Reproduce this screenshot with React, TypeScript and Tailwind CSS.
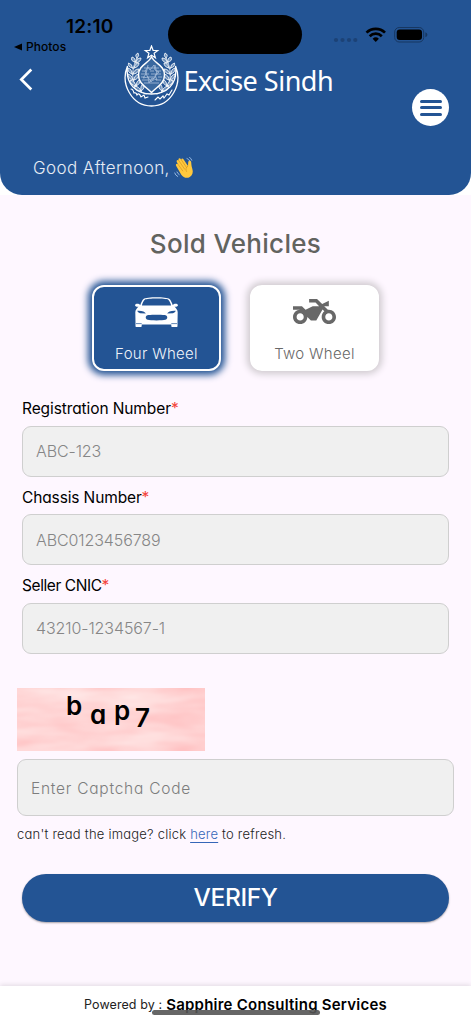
import { useState } from "react";
//
import { MdTwoWheeler } from "react-icons/md";

type VehicleType = "four" | "two";

const fields = [
  { label: "Registration Number", placeholder: "ABC-123", tracking: "tracking-[-0.1px]" },
  { label: "Chassis Number", placeholder: "ABC0123456789", tracking: "tracking-[-0.13px]" },
  { label: "Seller CNIC", placeholder: "43210-1234567-1", tracking: "tracking-[-0.42px]" },
];

const captcha = [
  { char: "b", className: "mt-0 w-[24px]" },
  { char: "a", className: "mt-[9px] w-[24px]" },
  { char: "p", className: "mt-[5px] w-[21px]" },
  { char: "7", className: "mt-[12px] w-[16px]" },
];

const StatusBar = () => (
  <div className="absolute inset-x-0 top-0 z-10 h-[60px] text-black [font-feature-settings:normal]">
    <span className="absolute left-[66px] top-[15px] text-[19px] leading-6 font-semibold tracking-[0.2px]">12:10</span>
    <div className="absolute left-[14px] top-[39px] flex items-center gap-[4px] text-[12px] leading-4 font-medium tracking-[0.05px]">
      <svg width="8" height="8" viewBox="0 0 8 8">
        <path d="M0 4 8 .6v6.8z" />
      </svg>
      Photos
    </div>
    <div className="absolute left-[168px] top-[15px] h-[39px] w-[134px] rounded-full bg-black" />
    <svg className="absolute left-[333px] top-[24px]" width="96" height="22" viewBox="333 24 96 22">
      <g fill="#1c4276">
        <circle cx="336" cy="40" r="2.1" />
        <circle cx="342.500" cy="40" r="2.1" />
        <circle cx="349" cy="40" r="2.1" />
        <circle cx="355.300" cy="40" r="2.1" />
      </g>
      <g fill="none" stroke="#000" strokeWidth="2.700">
        <path d="M366.500 32.600a13.200 13.200 0 0 1 18.500 0" />
        <path d="M369.700 36.200a8.600 8.600 0 0 1 12.100 0" />
      </g>
      <path d="M372.600 38.800a4.600 4.600 0 0 1 6.300 0l-3.150 3.300z" />
      <rect x="394.700" y="27.500" width="29" height="14.500" rx="4.500" fill="none" stroke="#173761" />
      <rect x="396.700" y="29.500" width="25.300" height="10.500" rx="3" />
      <path d="M425.400 32.300q2 .8 2 2.500t-2 2.500z" fill="#173761" />
    </svg>
  </div>
);

// one side of the wreath, the other one is mirrored
const Wreath = () => (
  <g fill="#6f92bd" stroke="#fff" strokeWidth=".8" strokeLinecap="round">
    <path d="M22 49C10 45 4 31 13 13" fill="none" />
    <path d="M13 13q-3-3 1-5 2 3-1 5zM11 17q-5-1-3-5 4 1 3 5zM12 18q0-5 5-5 0 4-5 5zM8.500 23q-5-1-4-5 4 1 4 5zM10 23q1-5 5-5 0 4-5 5zM8 29q-5-2-4-6 4 1 4 6zM9 29q1-5 6-5-1 5-6 5zM9 35q-6-2-5-6 4 1 5 6zM10 35q0-5 5-6 0 5-5 6zM12 41q-6-1-6-6 5 1 6 6zM12 41q0-5 4-7 1 5-4 7zM17 46q-6 0-7-5 5 0 7 5zM17 46q-1-5 2-7 3 4-2 7z" />
  </g>
);

const Emblem = () => (
  <svg width="55" height="62" viewBox="0 0 55 62" className="shrink-0">
    <path d="m27.500 1 1.600 4.300 4.700.2-3.700 2.800 1.300 4.500-3.900-2.600-3.900 2.600 1.300-4.500-3.700-2.800 4.700-.2z" fill="none" stroke="#fff" strokeWidth="1.200" />
    <Wreath />
    <g transform="translate(55 0) scale(-1 1)">
      <Wreath />
    </g>
    <path d="M27.500 12C24 19 14.500 20 14.500 30c0 9 8 12 13 17.500C32.500 42 40.500 39 40.500 30c0-10-9.500-11-13-18z" fill="#3a689f" stroke="#fff" strokeWidth="1.500" />
    <g fill="none" stroke="#a9bfda" strokeWidth=".8">
      <path d="M20 23h15M18 26h5m3 0h4m3 0h4M17 29h8m2 0h10M17 32h4m2 0h9m2 0h4M18 35h6m2 0h4m2 0h5M20 38h15" />
      <path d="m21 26 3-4 2 3 4-5 1 5 4 2-4 3 2 5-5-2-3 5-1-6-5 1 3-4zM24 20l-2 9 5 8 6-8-2-9" />
    </g>
    <path d="M3.500 21C-4 39 8 61 27.500 61S59 39 51.500 21C54 40 42 49 27.500 49S1 40 3.500 21z" fill="none" stroke="#fff" strokeWidth="1.300" />
    <path d="M7 44q2 0 3 4 2-1 3 2 2-3 4 2l3-2 1 3 3-1M31 55l3-3 2 2 3-3 1 2 3-4 2 1 3-5" fill="none" stroke="#fff" strokeWidth="1.100" strokeLinecap="round" />
  </svg>
);

const WavingHand = () => (
  <svg width="20" height="22" viewBox="0 0 20 22">
    <path
      d="M2.100 8.700c-.8-1.500 1-2.600 2-1.300L2.800 5C2 3.400 3.900 2.300 4.900 3.700L4.600 3C3.900 1.500 5.800.5 6.800 2l.6 1c-.4-1.400 1.200-2.100 2.100-.8l4.300 6.500c.7-1.200 0-3.500.9-4.700 1-1.200 2.300-.2 2.500 1.200.2 2.200.3 4.300 1.100 6.500 1.200 3.500.2 6.600-2.500 8.300-3 1.800-6.500.6-8.500-2.300z"
      fill="#ffc83d"
    />
    <path d="m4.200 7.500 4.500 6.400M4.900 3.800l5.800 8.400M7.400 3l5.200 7.600M14 9c-2.200 1.500-2.600 3.500-1.500 5.500" fill="none" stroke="#d99a24" strokeWidth=".8" strokeLinecap="round" />
    <path d="M13 1.500q2 .6 2.700 2.400M15.600.4q1.600.8 2.200 2.800M.7 16q.7 2.500 3 3.500M3 15q.6 1.700 2.200 2.600" fill="none" stroke="#9fc1e8" strokeWidth=".9" strokeLinecap="round" />
  </svg>
);

const CarIcon = () => (
  <svg width="43" height="30" viewBox="0 0 43 30" fill="#fff" className="shrink-0">
    <path
      fillRule="evenodd"
      d="M8.500 2C11.500-.2 31.500-.2 34.500 2c1.300 1 2.500 4 3.200 6l1-.8c1.800-.8 3.800-.4 4.300 1-.4 1.500-2.200 1.700-3.500 1.500 1.500 1.300 3.200 3.200 3.200 5.500L42.500 26v3.300c0 .4-.3.700-.7.700h-4.700c-.5 0-.8-.3-.8-.8V27.500H6.700v1.700c0 .5-.3.800-.8.800H1.200c-.4 0-.7-.3-.7-.7V26L.3 15.200c0-2.300 1.700-4.200 3.200-5.500C2.200 9.900.4 9.700 0 8.200c.5-1.400 2.500-1.800 4.300-1l1 .8c.7-2 1.900-5 3.200-6zM9.700 2.700C8.300 4 7.300 6.500 6.900 8.500h29.200c-.4-2-1.400-4.500-2.800-5.800-3-1.500-20.600-1.500-23.600 0zM2.200 13.800c.4 1.200 1.400 2 2.800 2.400l5.800.4c-.7-1.800-4.400-3.300-8.600-2.800zm38.600 0c-4.200-.5-7.900 1-8.600 2.800l5.800-.4c1.400-.4 2.400-1.200 2.800-2.400zM13.500 18c-3.200.2-3.800 3.800-.8 4.800 2.300.8 15.300.8 17.600 0 3-1 2.400-4.600-.8-4.800-4-.4-12-.4-16 0z"
    />
    <path d="M1 26.600h5.700m29.600 0h5.700" stroke="#235494" strokeWidth=".7" />
  </svg>
);

const Clouds = () => (
  <svg className="absolute inset-0" width="188" height="63">
    <filter id="clouds" x="0" y="0" width="100%" height="100%" colorInterpolationFilters="sRGB">
      <feTurbulence type="fractalNoise" baseFrequency="0.014 0.05" numOctaves="3" seed="8" />
      <feColorMatrix values="0 0 0 0 1  .22 0 0 0 .72  .21 0 0 0 .725  0 0 0 0 1" />
    </filter>
    <rect width="188" height="63" filter="url(#clouds)" />
  </svg>
);

const Header = () => (
  <header className="bg-white">
    <div className="h-[195px] rounded-b-[22px] bg-[#235494] pt-[44px]">
      <div className="flex h-[82px] items-start">
        <button className="ml-[19px] mt-[24px]">
          <svg width="14" height="23" viewBox="0 0 14 23" fill="none" stroke="#fff" strokeWidth="2.700">
            <path d="m12.300 1.500-10 10 10 10" />
          </svg>
        </button>
        <div className="ml-[90.500px] mt-[0.500px] flex h-[62px] items-center gap-[5px]">
          <Emblem />
          <h1 className="mt-[10px] whitespace-nowrap font-['Noto_Sans'] text-[27px] leading-9 tracking-[-0.5px] text-white">Excise Sindh</h1>
        </div>
        <button className="ml-auto mr-[22px] flex size-[37px] flex-col items-center justify-center gap-[3.500px] self-end rounded-full bg-white">
          <span className="h-[3px] w-[22px] rounded-full bg-[#235494]" />
          <span className="h-[3px] w-[22px] rounded-full bg-[#235494]" />
          <span className="h-[3px] w-[22px] rounded-full bg-[#235494]" />
        </button>
      </div>
      <div className="mt-[30px] flex h-6 items-center gap-[4px] pl-[33px]">
        <span className="pt-[2px] text-[17px] font-light tracking-[0.400px] text-[#e6ecf4]">Good Afternoon,</span>
        <WavingHand />
      </div>
    </div>
  </header>
);

export default function App() {
  const [vehicle, setVehicle] = useState<VehicleType>("four");

  const base = "flex h-[86px] w-[129px] flex-col items-center justify-between rounded-[12px] pb-[5px] pt-[10px] text-[15px] font-light leading-5 tracking-[0.3px]";
  const active = "border-2 border-white bg-[#235494] text-[#eef3fa] shadow-[0_0_7px_4px_#235494]";
  const idle = "border-2 border-white bg-white text-[#686868] shadow-[0_0_7px_3px_#cfcacf]";

  return (
    <div className="relative flex h-[1024px] w-[471px] flex-col overflow-hidden bg-[#fef7ff] font-['Inter',sans-serif] [font-feature-settings:'cv11']">
      <StatusBar />
      <Header />

      <main className="flex grow flex-col">
        <h2 className="mt-[33px] text-center text-[26px] font-medium leading-8 tracking-[0.3px] text-[#62635f]">Sold Vehicles</h2>

        <div className="mt-[25px] flex justify-center gap-[29px]">
          <button className={`${base} ${vehicle === "four" ? active : idle}`} onClick={() => setVehicle("four")}>
            <CarIcon />
            Four Wheel
          </button>
          <button className={`${base} ${vehicle === "two" ? active : idle}`} onClick={() => setVehicle("two")}>
            <span className="flex h-[29px] items-center">
              <MdTwoWheeler size={43} />
            </span>
            Two Wheel
          </button>
        </div>

        <form className="mt-[26px] flex flex-col px-[22px]">
          {fields.map((field) => (
            <label key={field.label} className="flex h-[88.700px] flex-col">
              <span className={`flex h-[28.500px] items-start text-[15.500px] leading-6 text-black ${field.tracking}`}>
                {field.label}
                <span className="text-[#f4433a]">*</span>
              </span>
              <input
                className="h-[51px] w-full rounded-[9px] border border-[#cfcfcf] bg-[#f0f0f0] px-[13px] text-[16px] font-light tracking-[-0.1px] placeholder:text-[#868686]"
                placeholder={field.placeholder}
              />
            </label>
          ))}
        </form>

        <section className="mt-[25px] flex flex-col px-[17px]">
          <div className="relative h-[63px] w-[188px] overflow-hidden">
            <Clouds />
            <div className="relative flex pl-[49px] pt-px text-[26px] font-semibold leading-[34px] text-black">
              {captcha.map((item) => (
                <span key={item.char} className={item.className}>
                  {item.char}
                </span>
              ))}
            </div>
          </div>
          <input
            className="mt-[8px] h-[57px] w-[437px] rounded-[9px] border border-[#cfcfcf] bg-[#f0f0f0] px-[13px] pt-[2px] text-[15.500px] font-light tracking-[0.750px] placeholder:text-[#7d7d7d]"
            placeholder="Enter Captcha Code"
          />
          <p className="mt-[8px] text-[13px] font-light leading-5 tracking-[0.220px] text-[#222]">
            can't read the image? click <a className="text-[#3566b8] underline underline-offset-[3px]">here</a> to refresh.
          </p>
        </section>

        <button className="mx-[22px] mt-[30px] h-[48px] rounded-full bg-[#235494] pb-[2px] text-[24.500px] font-medium tracking-[-0.4px] text-white shadow-[0_1px_2px_rgba(0,0,0,0.35)]">
          VERIFY
        </button>
      </main>

      <footer className="relative flex h-[38px] items-center justify-center gap-[4px] bg-white shadow-[0_-1px_5px_rgba(0,0,0,0.12)] [font-feature-settings:normal]">
        <span className="text-[12.500px] tracking-[0.1px] text-[#222]">Powered by :</span>
        <span className="text-[15px] font-semibold tracking-[0.230px] text-black">Sapphire Consulting Services</span>
        <div className="absolute left-[152px] top-[24px] h-[5px] w-[168px] rounded-full bg-[#555]/90" />
      </footer>
    </div>
  );
}
